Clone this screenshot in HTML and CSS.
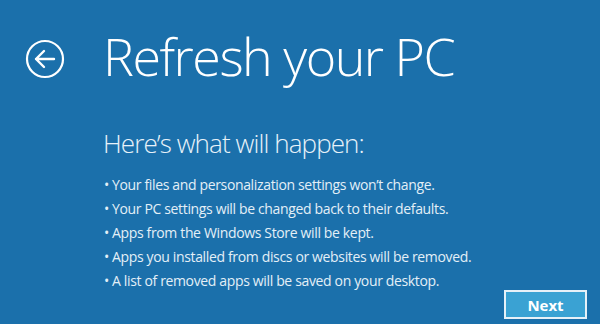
FILE: index.html
```html
<!DOCTYPE html>
<html>
<head>
<meta charset="utf-8">
<link rel="stylesheet" href="styles.css">
</head>
<body>
<div class="page">
  <header class="header">
    <svg class="back" width="40" height="40" viewBox="0 0 40 40">
      <circle cx="20" cy="20" r="18" fill="none" stroke="#fff" stroke-width="2.2"/>
      <path d="M11 20 H29 M19 12 L11 20 L19 28" fill="none" stroke="#fff" stroke-width="2.4" stroke-linecap="round" stroke-linejoin="round"/>
    </svg>
    <h1 class="title">Refresh your PC</h1>
  </header>
  <main class="content">
    <h2 class="subtitle">Here’s what will happen:</h2>
    <ul class="list">
      <li>Your files and personalization settings won’t change.</li>
      <li>Your PC settings will be changed back to their defaults.</li>
      <li>Apps from the Windows Store will be kept.</li>
      <li>Apps you installed from discs or websites will be removed.</li>
      <li>A list of removed apps will be saved on your desktop.</li>
    </ul>
  </main>
  <div class="actions">
    <button class="next">Next</button>
  </div>
</div>
</body>
</html>
```
FILE: styles.css
```css
html, body {
  margin: 0;
  padding: 0;
}
body {
  width: 600px;
  height: 324px;
  overflow: hidden;
  background: #1b70ab;
  color: #fff;
  font-family: "Open Sans", "Noto Sans", sans-serif;
}
.page {
  position: relative;
  width: 600px;
  height: 324px;
}
.header {
  display: flex;
  align-items: flex-start;
  padding: 26px 0 0 25px;
}
.back {
  flex: none;
  margin-top: 13px;
}
.title {
  margin: 0 0 0 38px;
  font-weight: 300;
  font-size: 52px;
  line-height: 60px;
  letter-spacing: -1.5px;
}
.content {
  padding: 40px 0 0 103px;
}
.subtitle {
  margin: 0;
  font-weight: 300;
  font-size: 26px;
  line-height: 34px;
  letter-spacing: -0.9px;
  color: #e8f2f9;
}
.list {
  list-style: none;
  margin: 13px 0 0;
  padding: 0;
  font-size: 14px;
  line-height: 24px;
  letter-spacing: -0.35px;
  color: #e3eff7;
}
.list li::before {
  content: "•";
  display: inline-block;
  width: 8px;
  margin-left: 1px;
}
.actions {
  position: absolute;
  right: 13px;
  bottom: 5px;
}
.next {
  display: block;
  width: 83px;
  height: 29px;
  border: 2px solid #e6f1f8;
  background: #3aa2d3;
  color: #fff;
  font-family: "Open Sans", "Noto Sans", sans-serif;
  font-weight: 700;
  font-size: 15px;
  padding: 0;
}
```
